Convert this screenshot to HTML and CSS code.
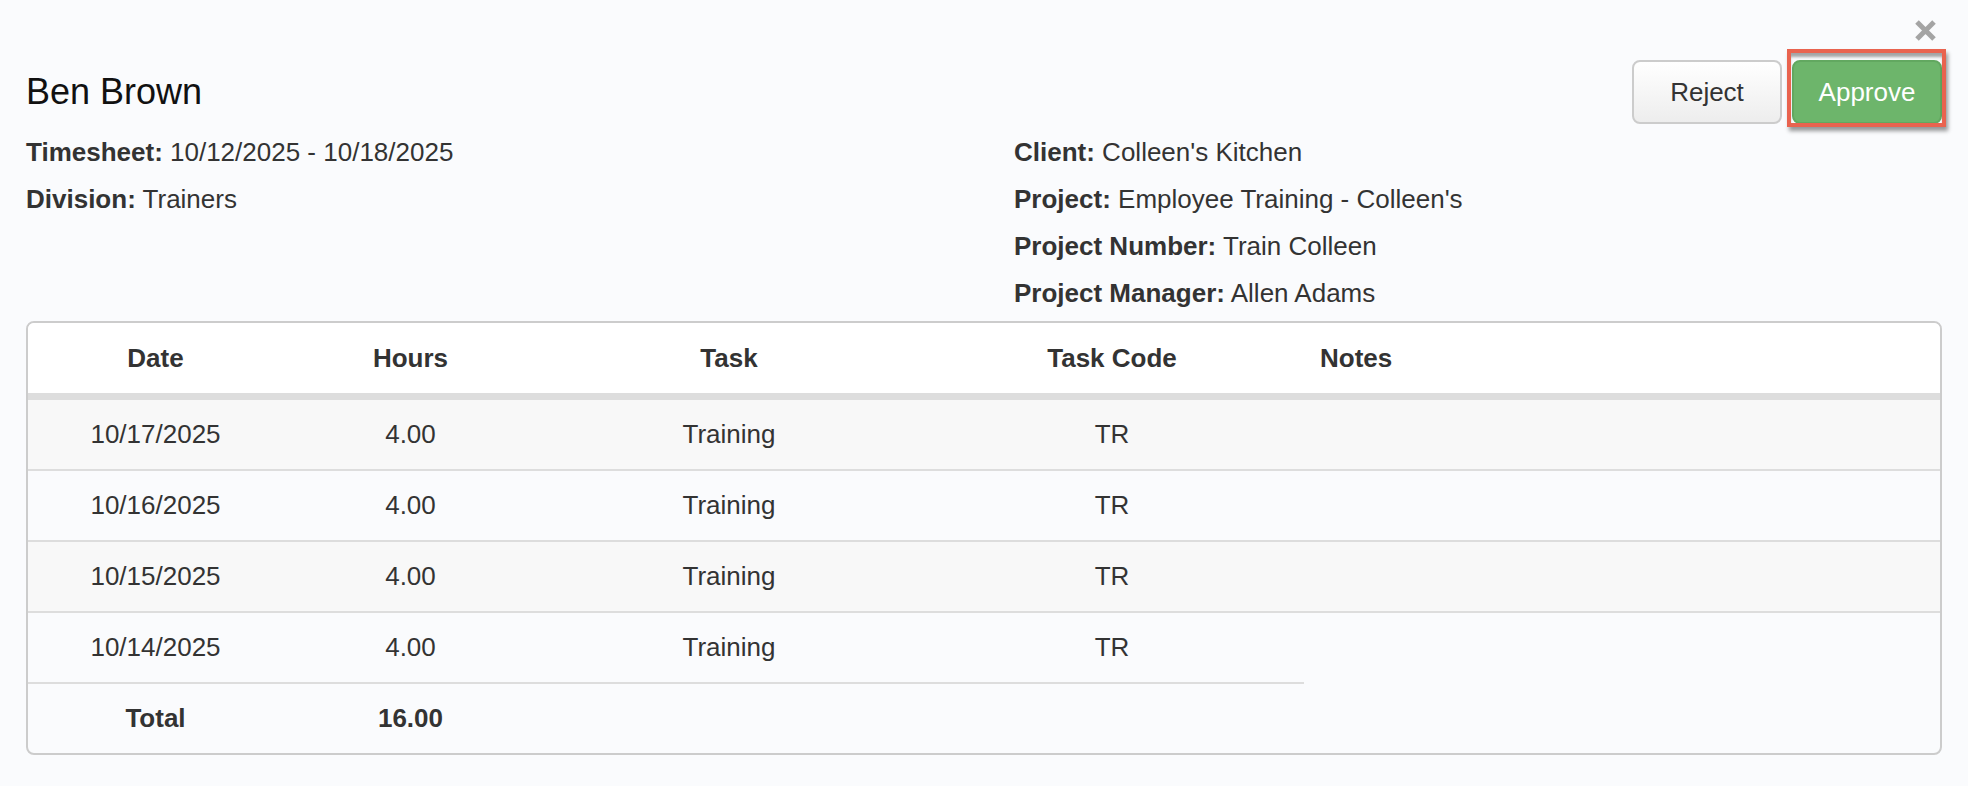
FILE: index.html
```html
<!DOCTYPE html>
<html lang="en">
<head>
    <meta charset="UTF-8">
    <meta name="viewport" content="width=device-width, initial-scale=1.0">
    <title>Timesheet Approval</title>
    <link rel="stylesheet" href="styles.css">
</head>
<body>
    <div class="modal">
        <button class="close-button" title="Close">
            <svg width="21" height="21" viewBox="0 0 21 21">
                <path d="M2 2 L19 19 M19 2 L2 19" stroke="#a4a4a4" stroke-width="5" fill="none"/>
            </svg>
        </button>

        <!-- Name and actions -->
        <div class="modal-header">
            <h2 class="employee-name">Ben Brown</h2>
            <div class="actions">
                <button class="btn btn-reject">Reject</button>
                <span class="highlight-wrap">
                    <button class="btn btn-approve">Approve</button>
                    <span class="highlight"></span>
                </span>
            </div>
        </div>

        <!-- Timesheet details -->
        <div class="details">
            <div>
                <div class="field"><b>Timesheet:</b> 10/12/2025 - 10/18/2025</div>
                <div class="field"><b>Division:</b> Trainers</div>
            </div>
            <div>
                <div class="field"><b>Client:</b> Colleen's Kitchen</div>
                <div class="field"><b>Project:</b> Employee Training - Colleen's</div>
                <div class="field"><b>Project Number:</b> Train Colleen</div>
                <div class="field"><b>Project Manager:</b> Allen Adams</div>
            </div>
        </div>

        <!-- Hours table -->
        <div class="table-wrap">
            <table class="hours-table">
                <colgroup>
                    <col class="col-date">
                    <col class="col-hours">
                    <col class="col-task">
                    <col class="col-code">
                    <col>
                </colgroup>
                <thead>
                    <tr>
                        <th>Date</th>
                        <th>Hours</th>
                        <th>Task</th>
                        <th>Task Code</th>
                        <th class="notes">Notes</th>
                    </tr>
                </thead>
                <tbody>
                    <tr><td>10/17/2025</td><td>4.00</td><td>Training</td><td>TR</td><td class="notes"></td></tr>
                    <tr><td>10/16/2025</td><td>4.00</td><td>Training</td><td>TR</td><td class="notes"></td></tr>
                    <tr><td>10/15/2025</td><td>4.00</td><td>Training</td><td>TR</td><td class="notes"></td></tr>
                    <tr><td>10/14/2025</td><td>4.00</td><td>Training</td><td>TR</td><td class="notes"></td></tr>
                </tbody>
                <tfoot>
                    <tr><td>Total</td><td>16.00</td><td></td><td></td></tr>
                </tfoot>
            </table>
        </div>
    </div>
</body>
</html>
```

FILE: styles.css
```css
body {
    margin: 0;
    background-color: #fafbfd;
    font-family: "Liberation Sans", Arial, Helvetica, sans-serif;
    font-size: 26px;
    color: #333;
}
.modal {
    position: relative;
    padding: 60px 26px 0;
}
.close-button {
    position: absolute;
    top: 20px;
    right: 32px;
    padding: 0;
    border: none;
    background: none;
    cursor: pointer;
}
.close-button svg {
    display: block;
}
.modal-header {
    display: flex;
    justify-content: space-between;
    align-items: flex-start;
}
.employee-name {
    margin: 12px 0 0;
    font-size: 36px;
    line-height: 40px;
    font-weight: normal;
    color: #111;
}
.actions {
    display: flex;
    gap: 10px;
}
.btn {
    width: 150px;
    height: 64px;
    font-family: inherit;
    font-size: 26px;
    border-radius: 8px;
    cursor: pointer;
}
.btn-reject {
    color: #333;
    background: linear-gradient(to bottom, #ffffff 0%, #ededed 100%);
    border: 2px solid #cccccc;
}
.btn-approve {
    display: block;
    color: #fff;
    background: #6db56b;
    border: 2px solid #62a860;
}
.highlight-wrap {
    position: relative;
    display: block;
}
/* red focus frame around the approve button */
.highlight {
    position: absolute;
    top: -11px;
    left: -5px;
    right: -4px;
    bottom: -3px;
    border: 4px solid #e9634f;
    box-shadow: 2px 4px 4px rgba(0, 0, 0, 0.4), inset 0 5px 3px -1px rgba(0, 0, 0, 0.35);
    pointer-events: none;
}
.details {
    display: grid;
    grid-template-columns: 988px 1fr;
    margin-top: 5px;
}
.field {
    line-height: 47px;
    white-space: nowrap;
}
.table-wrap {
    margin-top: 4px;
    border: 2px solid #cccccc;
    border-radius: 8px;
    overflow: hidden;
}
.hours-table {
    width: 100%;
    border-collapse: collapse;
    table-layout: fixed;
}
.col-date, .col-hours {
    width: 255px;
}
.col-task {
    width: 382px;
}
.col-code {
    width: 384px;
}
.hours-table th, .hours-table td {
    padding: 16px;
    line-height: 37px;
    text-align: center;
}
.hours-table th {
    padding-top: 17px;
    background: #fff;
    border-bottom: 7px solid #dddddd;
}
.hours-table td {
    border-top: 2px solid #dddddd;
}
.hours-table .notes {
    text-align: left;
}
.hours-table tbody tr:nth-child(odd) {
    background: #f8f8f8;
}
.hours-table tfoot td {
    font-weight: bold;
}
```
